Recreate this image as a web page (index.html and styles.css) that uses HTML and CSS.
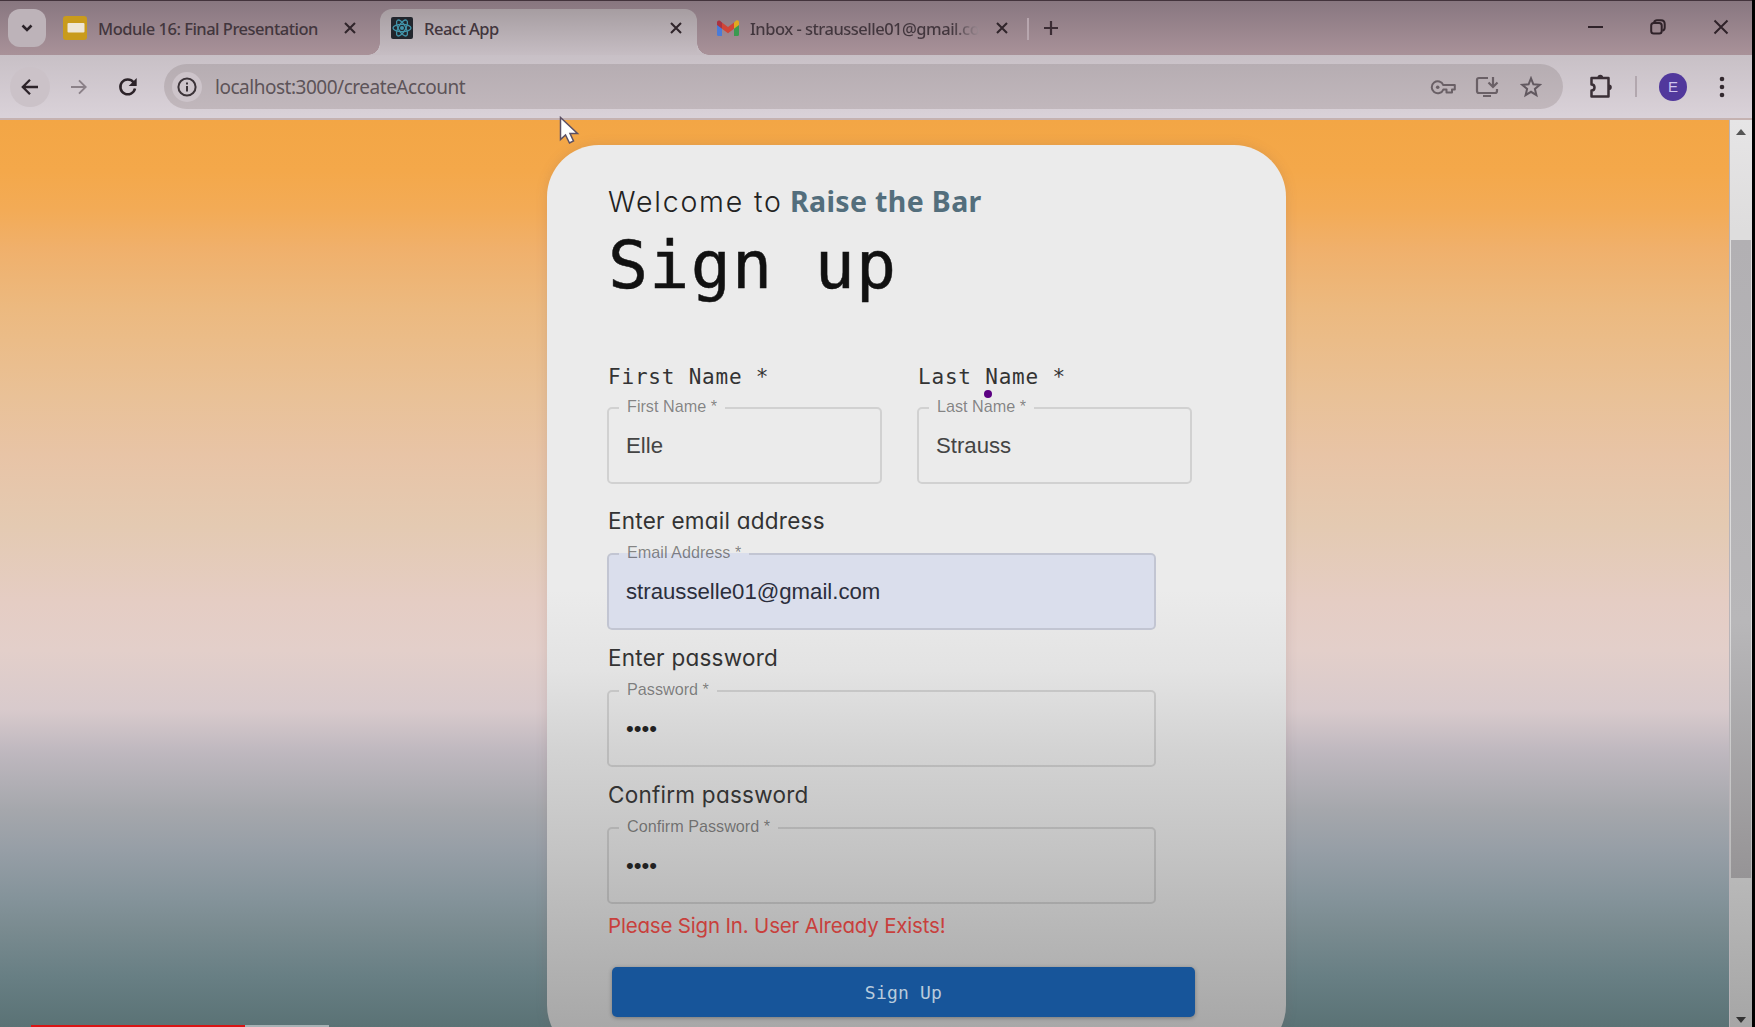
FILE: index.html
```html
<!DOCTYPE html>
<html lang="en">
<head>
<meta charset="utf-8">
<title>React App</title>
<link rel="stylesheet" href="styles.css">
</head>
<body>
<div class="window">
  <header class="tabstrip">
    <button class="tab-search"><svg width="14" height="10" viewBox="0 0 14 10"><path d="M2.500 2.500l4.500 4.500 4.500-4.500" fill="none" stroke="#2b2329" stroke-width="2.600"/></svg></button>
    <div class="tab first">
      <svg class="fav" width="24" height="24" viewBox="0 0 24 24"><rect width="24" height="24" rx="3" fill="#c99b1c"/><rect x="4.500" y="7" width="17" height="9.500" rx="1" fill="#eee6d6"/></svg>
      <span class="tab-title">Module 16: Final Presentation</span>
      <svg class="x" width="12" height="12" viewBox="0 0 12 12"><path d="M1 1l10 10M11 1L1 11"/></svg>
    </div>
    <div class="tab active">
      <svg class="fav" width="22" height="22" viewBox="0 0 22 22"><rect width="22" height="22" rx="2" fill="#22262d"/><g fill="none" stroke="#4294aa" stroke-width="1.300"><ellipse cx="11" cy="11" rx="9" ry="3.600"/><ellipse cx="11" cy="11" rx="9" ry="3.600" transform="rotate(60 11 11)"/><ellipse cx="11" cy="11" rx="9" ry="3.600" transform="rotate(120 11 11)"/></g><circle cx="11" cy="11" r="2" fill="#4294aa"/></svg>
      <span class="tab-title">React App</span>
      <svg class="x" width="12" height="12" viewBox="0 0 12 12"><path d="M1 1l10 10M11 1L1 11"/></svg>
    </div>
    <div class="tab third">
      <svg class="fav" width="22" height="16" viewBox="0 0 22 16"><path d="M0 2h5v14H1.500A1.500 1.500 0 0 1 0 14.500z" fill="#4a7bd8"/><path d="M17 2h5v12.500a1.500 1.500 0 0 1-1.500 1.500H17z" fill="#3a9a50"/><path d="M17 2.500l2-1.800c1.500-1 3 0 3 1.800v2.500l-5 3.800z" fill="#e0a820"/><path d="M5 2.500L11 7l6-4.500v6.300l-6 4.500-6-4.500z" fill="#d04538"/><path d="M0 5V2.500C0 .7 1.700-.2 3 .8l2 1.700v6.300z" fill="#ab3340"/></svg>
      <span class="tab-title fade">Inbox - strausselle01@gmail.co</span>
      <svg class="x" width="12" height="12" viewBox="0 0 12 12"><path d="M1 1l10 10M11 1L1 11"/></svg>
    </div>
    <i class="tab-sep"></i>
    <svg class="new-tab" width="14" height="14" viewBox="0 0 14 14"><path d="M7 0v14M0 7h14" stroke="#3b2c34" stroke-width="2.200"/></svg>
    <div class="controls">
      <svg width="15" height="16" viewBox="0 0 15 16"><path d="M0 8h15" stroke="#2f2229" stroke-width="2"/></svg>
      <svg width="16" height="16" viewBox="0 0 16 16"><g fill="none" stroke="#2f2229" stroke-width="2"><rect x="1.200" y="4" width="10.500" height="10.500" rx="2.500"/><path d="M4 3.500C4.500 2 5.500 1.300 7 1.300h4c2.500 0 3.700 1.300 3.700 3.700v3.500c0 1.700-.7 2.700-2.200 3.200"/></g></svg>
      <svg width="16" height="16" viewBox="0 0 16 16"><path d="M1.500 1.500l13 13M14.500 1.500l-13 13" stroke="#2f2229" stroke-width="2"/></svg>
    </div>
  </header>

  <nav class="toolbar">
    <span class="nav-btn back"><svg width="18" height="18" viewBox="0 0 18 18"><path d="M17 9H2M9 1.800L1.800 9 9 16.200" fill="none" stroke="#2c2329" stroke-width="2.300"/></svg></span>
    <span class="nav-btn"><svg width="16" height="16" viewBox="0 0 16 16"><path d="M0 8h14.500M8 1.300L14.700 8 8 14.700" fill="none" stroke="#8b8188" stroke-width="1.900"/></svg></span>
    <span class="nav-btn"><svg width="20" height="20" viewBox="0 0 20 20"><path d="M17 11.500A7.400 7.400 0 1 1 15.500 5.200L17 7" fill="none" stroke="#2c2329" stroke-width="2.500"/><path d="M18.700 1v8h-8z" fill="#2c2329"/></svg></span>
    <div class="omnibox">
      <span class="info"><svg width="20" height="20" viewBox="0 0 20 20"><circle cx="10" cy="10" r="8.600" fill="none" stroke="#3b3338" stroke-width="2"/><path d="M10 9v5.500M10 5.500v2" stroke="#3b3338" stroke-width="2"/></svg></span>
      <span class="url">localhost:3000/createAccount</span>
      <svg class="key" width="26" height="16" viewBox="0 0 26 16"><path d="M13.300 6A6 6 0 1 0 13.300 10.500H16.500v3h5.500v-3h2.800V6z" fill="none" stroke="#6a6066" stroke-width="2" stroke-linejoin="round"/><circle cx="7.700" cy="8.200" r="1.800" fill="#6a6066"/></svg>
      <svg class="install" width="24" height="22" viewBox="0 0 24 22"><g fill="none" stroke="#6a6066" stroke-width="2.200"><path d="M13 2H4Q2 2 2 4v11q0 2 2 2h16q2 0 2-2v-2"/><path d="M18 1v9M13.500 6.500L18 11l4.500-4.500M8 20h8"/></g></svg>
      <svg class="star" width="22" height="22" viewBox="0 0 22 22"><path d="M11 2.300l2.400 6 6.400.5-4.900 4.100 1.500 6.300L11 15.800l-5.400 3.400 1.500-6.300-4.900-4.100 6.400-.5z" fill="none" stroke="#625960" stroke-width="2"/></svg>
    </div>
    <svg class="ext" width="25" height="25" viewBox="0 0 25 25"><path d="M4 4h16.500v18.500H3.500v-6c4 0 4-6 0-6V4z" fill="none" stroke="#3a2f36" stroke-width="2.500" stroke-linejoin="round"/><path d="M9.500 3.500a2.800 2.800 0 0 1 5.600 0zM21 10.500a2.800 2.800 0 0 1 0 5.600z" fill="#3a2f36"/></svg>
    <i class="bar-sep"></i>
    <span class="avatar">E</span>
    <svg class="dots" width="6" height="22" viewBox="0 0 6 22"><g fill="#33292f"><circle cx="3" cy="3" r="2.300"/><circle cx="3" cy="11" r="2.300"/><circle cx="3" cy="19" r="2.300"/></g></svg>
  </nav>

  <div class="viewport">
    <main class="page">
      <section class="card">
        <p class="welcome"><span>Welcome to</span><b>Raise the Bar</b></p>
        <h1 class="title">Sign up</h1>
        <div class="names">
          <div>
            <div class="mono-label">First Name *</div>
            <fieldset class="field"><legend>First Name *</legend><span class="value">Elle</span></fieldset>
          </div>
          <div>
            <div class="mono-label">Last Name *</div>
            <fieldset class="field"><legend>Last Name *</legend><span class="value">Strauss</span></fieldset>
          </div>
        </div>
        <div class="label email-label">Enter email address</div>
        <fieldset class="field wide autofill"><legend>Email Address *</legend><span class="value">strausselle01@gmail.com</span></fieldset>
        <div class="label">Enter password</div>
        <fieldset class="field wide"><legend>Password *</legend><span class="value pw">••••</span></fieldset>
        <div class="label">Confirm password</div>
        <fieldset class="field wide"><legend>Confirm Password *</legend><span class="value pw">••••</span></fieldset>
        <p class="error">Please Sign In. User Already Exists!</p>
        <button class="submit">Sign Up</button>
      </section>
    </main>
    <aside class="scrollbar">
      <svg width="10" height="6" viewBox="0 0 10 6"><path d="M5 0l5 6H0z" fill="#555"/></svg>
      <div class="thumb"></div>
      <svg class="down" width="10" height="6" viewBox="0 0 10 6"><path d="M5 6l5-6H0z" fill="#333"/></svg>
    </aside>
  </div>
</div>

<svg class="cursor" width="22" height="30" viewBox="0 0 22 30"><path d="M1.500 1.500v22l5-4.500 4 8 4-2-3.500-7.500h7.500z" fill="#fff" stroke="#5c5064" stroke-width="1.500"/></svg>
<i class="pointer-dot"></i>
<div class="progress"><i class="played"></i><i class="loaded"></i></div>
</body>
</html>
```
FILE: styles.css
```css
* { box-sizing: border-box; }
body { margin: 0; width: 1755px; height: 1027px; overflow: hidden; position: relative; background: #000; font-family: "Liberation Sans", Arial, sans-serif; }
svg { display: block; flex: none; }
button { border: 0; padding: 0; font: inherit; }

.window { width: 1752px; height: 1027px; display: flex; flex-direction: column; border-top: 1px solid #43333c; }

.tabstrip { height: 54px; flex: none; display: flex; align-items: flex-start; padding: 8px 23px 0 8px; background: linear-gradient(#887780, #a99299); }
.tab-search { width: 38px; height: 38px; border-radius: 12px; background: #bdb3b9; display: flex; align-items: center; justify-content: center; }
.tab { height: 46px; display: flex; align-items: center; padding-bottom: 8px; }
.tab.first { width: 334px; padding-left: 17px; padding-right: 24px; }
.tab.active { width: 317px; padding-left: 11px; padding-right: 15px; border-radius: 12px 12px 0 0; background: linear-gradient(#a69da1, #c6bdc3); position: relative; }
.tab.active::before, .tab.active::after { content: ""; position: absolute; bottom: 0; width: 12px; height: 12px; }
.tab.active::before { left: -12px; background: radial-gradient(circle at 0 0, transparent 11.500px, #c5bcc2 12px); }
.tab.active::after { right: -12px; background: radial-gradient(circle at 100% 0, transparent 11.500px, #c5bcc2 12px); }
.tab.third { width: 311px; padding-left: 20px; }
.tab-title { margin-left: 11px; padding-top: 1px; font: 500 16.500px "Noto Sans", sans-serif; letter-spacing: -.5px; color: #42363d; white-space: nowrap; }
.fade { background: linear-gradient(90deg, #42363d 88%, #9a8991 100%); -webkit-background-clip: text; background-clip: text; color: transparent; }
.x { margin-left: auto; fill: none; stroke: #30252b; stroke-width: 2.100; }
.tab-sep { width: 2px; height: 22px; margin: 9px 0 0 19px; background: #b7a6ae; }
.new-tab { margin: 12px 0 0 15px; }
.controls { margin: 10px 0 0 auto; display: flex; gap: 47px; }

.toolbar { height: 65px; flex: none; display: flex; align-items: center; padding: 0 27px 0 10px; background: linear-gradient(#c8c0c6, #dad2d9); border-bottom: 2px solid #c5b2b1; }
.nav-btn { width: 40px; height: 40px; margin-right: 9px; border-radius: 50%; display: flex; align-items: center; justify-content: center; }
.nav-btn.back { background: #cbc2c8; }
.omnibox { width: 1399px; height: 45px; margin-left: 7px; border-radius: 23px; padding: 0 21px 0 8px; display: flex; align-items: center; background: linear-gradient(#b6adb2, #c1b7bc); }
.info { width: 30px; height: 30px; border-radius: 50%; background: #cdc4ca; display: flex; align-items: center; justify-content: center; }
.url { margin-left: 13px; font: 19px "Noto Sans", sans-serif; letter-spacing: -.48px; color: #5d5459; }
.key { margin-left: auto; }
.install { margin-left: 19px; }
.star { margin-left: 21px; }
.ext { margin-left: 25px; }
.bar-sep { width: 2px; height: 21px; margin-left: 22px; background: #b2a7ae; }
.avatar { width: 28px; height: 28px; margin-left: 22px; border-radius: 50%; background: #51389c; color: #cfc4ee; font: 500 15px/28px "Liberation Sans", Arial, sans-serif; text-align: center; }
.dots { margin-left: auto; }

.viewport { flex: 1; min-height: 0; display: flex; overflow: hidden; }
.page { flex: 1; padding: 25px 0 0 547px; overflow: hidden;
  background: linear-gradient(#f3a645 0, #f4a84a 50px, #f3ab56 90px, #f0b06b 128px, #ecb97f 187px, #e9c197 276px, #e8c4a6 335px, #e4cab2 406px, #e5cdc4 483px, #e3cfca 530px, #d8cacc 590px, #bfb8bf 631px, #a5a7ac 690px, #969ea6 731px, #84939a 779px, #7a8b90 808px, #687f84 856px, #5a7275 907px); }
.card { width: 739px; height: 912px; border-radius: 52px; padding: 34px 0 0 60px; background: linear-gradient(#ebebeb 0, #ebebeb 445px, #e3e3e3 525px, #d3d3d3 605px, #c4c4c4 705px, #b7b7b7 785px, #a8a8a8 882px); box-shadow: 0 0 12px rgba(120, 90, 90, .18); }
.welcome { margin: 0 0 0 1px; height: 44px; display: flex; align-items: baseline; line-height: 44px; color: #222; white-space: nowrap; }
.welcome span { width: 182px; font-family: Inter, sans-serif; font-weight: 300; font-size: 28.500px; letter-spacing: 1.800px; font-feature-settings: "cv11"; }
.welcome b { font: 700 28.500px/44px "Noto Sans", sans-serif; letter-spacing: .35px; color: #536e7c; }
.title { margin: -2px 0 0 1px; height: 90px; font: 400 66.500px/88px "DejaVu Sans Mono", monospace; letter-spacing: 1.300px; -webkit-text-stroke: .5px #111; color: #111; }
.names { display: flex; gap: 35px; margin-top: 49px; }
.mono-label { height: 39px; padding-left: 1px; font: 21px/34px "DejaVu Sans Mono", monospace; letter-spacing: .8px; color: #333; }
.field { margin: 0; width: 275px; height: 85px; padding: 0 0 0 17px; border: 2px solid rgba(0, 0, 0, .11); border-radius: 5px; }
.field.wide { width: 549px; }
.field legend { height: 17px; margin-left: -7px; padding: 0 8px; font-size: 16.200px; line-height: 15px; color: rgba(0, 0, 0, .46); }
.value { display: block; margin-top: 18px; font-size: 22.200px; line-height: 24px; color: #444; }
.autofill { background: #dadeec; }
.autofill .value { color: #2b2e3c; }
.value.pw { color: #222; }
.label { height: 52px; padding-left: 1px; font: 400 22.500px/55px Inter, sans-serif; letter-spacing: .25px; font-feature-settings: "cv11"; color: #333; white-space: nowrap; }
.label.email-label { height: 61px; line-height: 73px; }
.error { margin: 0; height: 63px; padding-left: 1px; font: 400 20.500px/44px Inter, sans-serif; letter-spacing: -.18px; font-feature-settings: "cv11"; color: #c8403c; white-space: nowrap; }
.submit { display: block; width: 583px; height: 50px; margin-left: 5px; border-radius: 5px; background: #17559a; color: #b9cbdc; font: 18px/51px "DejaVu Sans Mono", monospace; letter-spacing: .2px; box-shadow: 0 1px 4px rgba(0, 0, 0, .3); }

.scrollbar { width: 23px; border-left: 1px solid #b9b4b8; display: flex; flex-direction: column; align-items: center; padding: 9px 0 4px; background: linear-gradient(#e6e5e6 0, #dedddd 110px, #dcdcdc 500px, #b8b8b8 760px, #a6a6a6 907px); }
.thumb { width: 20px; height: 638px; margin-top: 105px; background: linear-gradient(#b2b0b3, #b8b7b9 60%, #969496); }
.down { margin-top: auto; }

.cursor { position: absolute; left: 559px; top: 116px; }
.pointer-dot { position: absolute; left: 984px; top: 390px; width: 8px; height: 8px; border-radius: 50%; background: #5b0082; }
.progress { position: absolute; left: 31px; bottom: 0; display: flex; }
.progress i { height: 2px; }
.played { width: 214px; background: #d91414; }
.loaded { width: 84px; background: #a6b2b5; }
```
